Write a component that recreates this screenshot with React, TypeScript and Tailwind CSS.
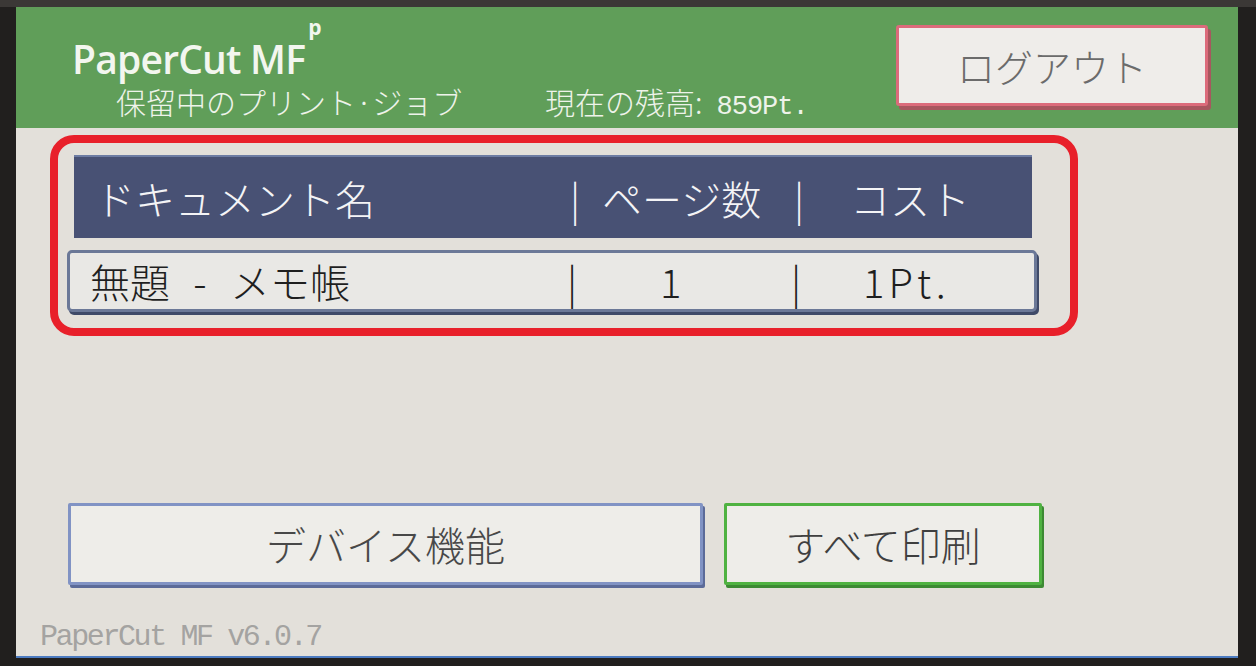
import React from 'react';

const jp = { fontFamily: '"Noto Sans CJK JP", "Noto Sans", sans-serif' };
const mono = { fontFamily: '"Liberation Mono", "DejaVu Sans Mono", monospace' };

const Separator = ({ color }: { color: string }) => (
  <span className={`w-[20px] text-center ${color}`}>|</span>
);

const App = () => {
  return (
    <div className="w-[1256px] h-[666px] bg-[#211f1e] overflow-hidden">
      <div className="h-[7px] bg-[#3b3836]" />
      <div className="ml-[16px] w-[1222px] h-[651px] bg-[#e3e0da] border-b-2 border-[#4c7bc0] flex flex-col">
        {/* green title area */}
        <div className="h-[121px] bg-[#609e59] flex items-start">
          <div className="flex-1 flex flex-col">
            <div
              className="pl-[56px] pt-[32px] text-[39px] leading-none font-semibold text-[#f3f6ef] tracking-[-0.8px]"
              style={{ fontFamily: '"Open Sans", "Liberation Sans", sans-serif' }}
            >
              PaperCut MF
              <span className="inline-block text-[21px] font-bold align-top -translate-y-[22px] ml-[3px]">p</span>
            </div>
            <div className="mt-[8px] pl-[100px] flex items-baseline text-[30px] leading-none font-light text-[#eef3ea]" style={jp}>
              <span className="w-[429px]">保留中のプリント·ジョブ</span>
              <span>現在の残高:</span>
              <span className="ml-[14px] text-[27px] tracking-[-1px]" style={mono}>859Pt.</span>
            </div>
          </div>
          <button
            className="mt-[18px] mr-[30px] w-[312px] h-[81px] bg-[#efedea] border-[3px] border-[#dc6b7b] rounded-[3px] shadow-[3px_4px_0_#a8575f] text-[38px] font-light text-[#6b6b6b] flex items-center justify-center"
            style={jp}
          >
            ログアウト
          </button>
        </div>

        {/* highlighted job list */}
        <div className="mt-[7px] ml-[34px] w-[1028px] h-[201px] border-[8px] border-[#e8202a] rounded-[24px] flex flex-col">
          <div
            className="mt-[12px] ml-[16px] w-[958px] h-[83px] bg-[#485174] border-t-2 border-[#6d7ca3] flex items-center text-[40px] leading-none font-light text-[#f4f4f6]"
            style={jp}
          >
            <span className="w-[491px] pl-[21px]">ドキュメント名</span>
            <Separator color="text-[#f4f4f6]" />
            <span className="w-[204px] pl-[17px]">ページ数</span>
            <Separator color="text-[#f4f4f6]" />
            <span className="pl-[41px]">コスト</span>
          </div>
          <div
            className="mt-[12px] ml-[9px] w-[970px] h-[62px] bg-[#e9e8e5] border-[3px] border-[#6b7897] rounded-[5px] shadow-[2px_3px_0_#3f4a68] flex items-center text-[40px] leading-none font-light text-[#1f1f1f]"
            style={jp}
          >
            <span className="w-[492px] pl-[20px] flex">
              無題
              <span className="w-[60px] text-center">-</span>
              メモ帳
            </span>
            <Separator color="text-[#1f1f1f]" />
            <span className="w-[204px] pl-[78px]">1</span>
            <Separator color="text-[#1f1f1f]" />
            <span className="pl-[57px] tracking-[4px]">1Pt.</span>
          </div>
        </div>

        {/* action buttons */}
        <div className="mt-[167px] ml-[52px] flex gap-[21px]">
          <button
            className="w-[635px] h-[82px] bg-[#eeede9] border-[3px] border-[#8193c4] rounded-[2px] shadow-[2px_3px_0_#5c6b99] text-[40px] font-light text-[#484848] flex items-center justify-center"
            style={jp}
          >
            デバイス機能
          </button>
          <button
            className="w-[318px] h-[82px] bg-[#eeede9] border-[3px] border-[#4fb241] rounded-[2px] shadow-[2px_3px_0_#3d8a33] text-[40px] font-light text-[#3f3f3f] flex items-center justify-center"
            style={jp}
          >
            すべて印刷
          </button>
        </div>

        <div className="mt-[37px] pl-[24px] text-[30px] leading-none tracking-[-2.4px] text-[#a4a3a1]" style={mono}>
          PaperCut MF v6.0.7
        </div>
      </div>
    </div>
  );
};

export default App;
